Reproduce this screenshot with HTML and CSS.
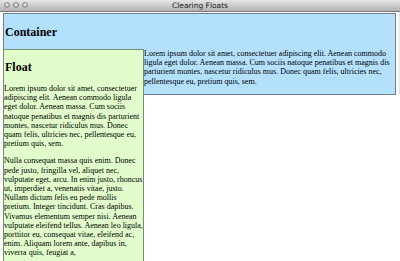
FILE: index.html
```html
<!DOCTYPE html>
<html lang="en">
<head>
    <meta charset="UTF-8">
    <title>Clearing Floats</title>
    <link rel="stylesheet" href="styles.css">
</head>
<body>
    <div class="titlebar">
        <div class="lights">
            <span></span><span></span><span></span>
        </div>
        <span class="title">Clearing Floats</span>
    </div>
    <div class="page">
        <div class="container">
            <h2>Container</h2>
            <div class="float">
                <h2>Float</h2>
                <p>Lorem ipsum dolor sit amet, consectetuer adipiscing elit. Aenean commodo ligula eget dolor. Aenean massa. Cum sociis natoque penatibus et magnis dis parturient montes, nascetur ridiculus mus. Donec quam felis, ultricies nec, pellentesque eu, pretium quis, sem.</p>
                <p>Nulla consequat massa quis enim. Donec pede justo, fringilla vel, aliquet nec, vulputate eget, arcu. In enim justo, rhoncus ut, imperdiet a, venenatis vitae, justo. Nullam dictum felis eu pede mollis pretium. Integer tincidunt. Cras dapibus. Vivamus elementum semper nisi. Aenean vulputate eleifend tellus. Aenean leo ligula, porttitor eu, consequat vitae, eleifend ac, enim. Aliquam lorem ante, dapibus in, viverra quis, feugiat a,</p>
            </div>
            <p>Lorem ipsum dolor sit amet, consectetuer adipiscing elit. Aenean commodo ligula eget dolor. Aenean massa. Cum sociis natoque penatibus et magnis dis parturient montes, nascetur ridiculus mus. Donec quam felis, ultricies nec, pellentesque eu, pretium quis, sem.</p>
        </div>
    </div>
</body>
</html>
```

FILE: styles.css
```css
body {
    margin: 0;
    height: 261px;
    overflow: hidden;
    background-color: #ffffff;
    font-family: 'Liberation Serif', 'Times New Roman', serif;
    font-size: 8px;
    line-height: 9.2px;
    color: #000;
}

/* window chrome */
.titlebar {
    height: 11px;
    background: linear-gradient(#e6e6e6, #b2b2b2);
    border-bottom: 1px solid #7a7a7a;
    display: flex;
    align-items: center;
    justify-content: center;
    position: relative;
}

.lights {
    position: absolute;
    left: 4px;
    top: 2px;
    display: flex;
    gap: 3px;
}

.lights span {
    width: 6px;
    height: 6px;
    border-radius: 50%;
    background: radial-gradient(circle at 50% 35%, #f2f2f2, #9c9c9c);
    border: 1px solid #8a8a8a;
    box-sizing: border-box;
}

.title {
    font-family: 'DejaVu Sans', sans-serif;
    font-size: 7.5px;
    line-height: 11px;
    color: #222;
}

.page {
    padding: 1px 3px 0 3px;
    border-right: 1px solid #e2e2e2;
}

.container {
    background-color: #b3e0fd;
    border: 1px solid #6f7f8c;
}

.container h2 {
    font-size: 12px;
    line-height: 14px;
    margin: 11px 1px 10px;
}

.container p {
    margin: 8px 4px 8px 1px;
}

.float {
    float: left;
    width: 139px;
    background-color: #e0fdcb;
    border: 1px solid #7c8a72;
    margin-left: -1px;
}

.float h2 {
    margin: 10px 0 10px 1px;
}

.float p {
    margin: 8px 0;
}
```
